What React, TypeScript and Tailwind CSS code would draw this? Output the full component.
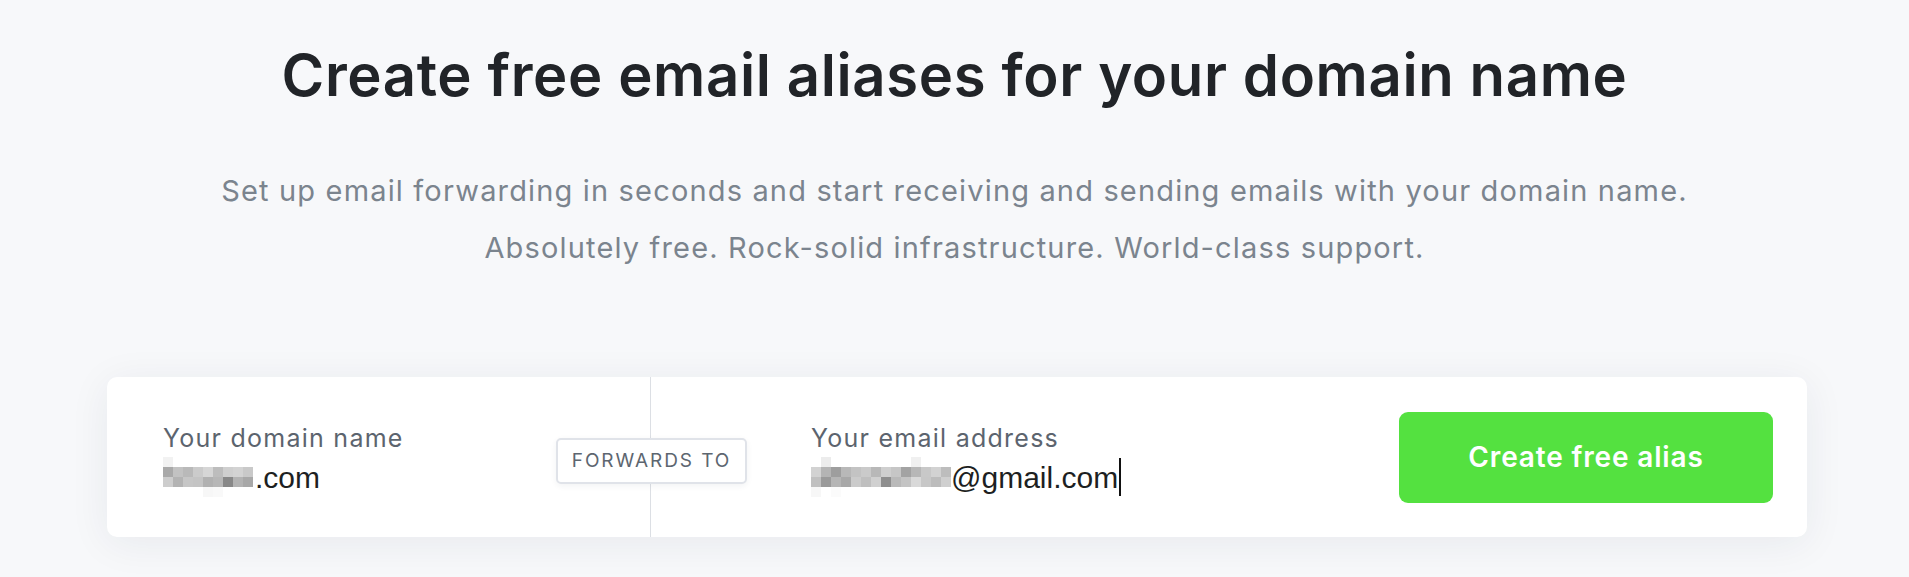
import { Fragment } from 'react';

const domainPixels = [
  ['#f2f2f2', '#ffffff', '#ffffff', '#ffffff', '#ffffff', '#ffffff', '#ffffff', '#ffffff', '#ffffff'],
  ['#a9a9a9', '#c2c2c2', '#b9b9b9', '#cbcbcb', '#d6d6d6', '#bdbdbd', '#cfcfcf', '#d3d3d3', '#c9c9c9'],
  ['#cdcdcd', '#b3b3b3', '#c6c6c6', '#c4c4c4', '#b1b1b1', '#b7b7b7', '#888888', '#b3b3b3', '#a8a8a8'],
  ['#ffffff', '#ffffff', '#ffffff', '#ffffff', '#f7f7f7', '#f9f9f9', '#ffffff', '#ffffff', '#ffffff'],
];

const emailPixels = [
  ['#ffffff', '#ececec', '#ffffff', '#ffffff', '#ffffff', '#ffffff', '#ffffff', '#ffffff', '#ffffff', '#ffffff', '#f0f0f0', '#ffffff', '#ffffff', '#ffffff'],
  ['#d2d2d2', '#b4b4b4', '#9e9e9e', '#b8b8b8', '#c3c3c3', '#cacaca', '#b8b8b8', '#cfcfcf', '#c6c6c6', '#a3a3a3', '#b7b7b7', '#c8c8c8', '#d2d2d2', '#bdbdbd'],
  ['#c0c0c0', '#9a9a9a', '#b5b5b5', '#a8a8a8', '#cbcbcb', '#bfbfbf', '#d0d0d0', '#8e8e8e', '#b9b9b9', '#c4c4c4', '#d9d9d9', '#c7c7c7', '#bcbcbc', '#cfcfcf'],
  ['#f7f7f7', '#ffffff', '#fbfbfb', '#ffffff', '#ffffff', '#ffffff', '#ffffff', '#ffffff', '#ffffff', '#ffffff', '#ffffff', '#ffffff', '#ffffff', '#ffffff'],
];

function Pixelated({ rows }: { rows: string[][] }) {
  return (
    <span className="inline-flex flex-col shrink-0">
      {rows.map((row, i) => (
        <span key={i} className="flex">
          {row.map((c, j) => (
            <Fragment key={j}>
              <span className="block w-[10px] h-[10px]" style={{ backgroundColor: c }} />
            </Fragment>
          ))}
        </span>
      ))}
    </span>
  );
}

export default function App() {
  return (
    <div className="min-h-[577px] bg-[#f7f8fa] pt-[40px] font-['Inter',sans-serif]">
      <h1 className="text-center text-[58px] leading-[70px] font-semibold text-[#212428] tracking-[0.011em]">
        Create free email aliases for your domain name
      </h1>

      <p className="mt-[52px] text-center text-[29px] leading-[57px] text-[#7b848e] tracking-[0.04em]">
        Set up email forwarding in seconds and start receiving and sending emails with your domain name.
        <br />
        Absolutely free. Rock-solid infrastructure. World-class support.
      </p>

      {/* Alias form */}
      <div className="ml-[107px] mt-[101px] w-[1700px] h-[160px] bg-white rounded-[10px] shadow-[0_6px_40px_rgba(30,45,70,0.07)] flex relative">
        <div className="w-[543px] pl-[56px] pt-[7px] flex flex-col justify-center">
          <span className="text-[25px] leading-[30px] text-[#5c646e] tracking-[0.05em]">Your domain name</span>
          <span className="mt-[3px] flex items-center h-[42px] font-['Liberation_Sans',Arial,sans-serif] text-[30px] text-[#1d1f22]">
            <Pixelated rows={domainPixels} />
            <span className="ml-[2px]">.com</span>
          </span>
        </div>

        <div className="flex-1 border-l border-[#dcdfe4] pl-[160px] pr-[34px] flex items-center">
          <div className="flex-1 pt-[7px] flex flex-col justify-center">
            <span className="text-[25px] leading-[30px] text-[#5c646e] tracking-[0.05em]">Your email address</span>
            <span className="mt-[3px] flex items-center h-[42px] font-['Liberation_Sans',Arial,sans-serif] text-[30px] text-[#1d1f22]">
              <Pixelated rows={emailPixels} />
              <span>@gmail.com</span>
              <span className="ml-[1px] w-[2px] h-[38px] bg-[#111]" />
            </span>
          </div>
          <button className="w-[374px] h-[91px] rounded-[9px] bg-[#54e140] text-white text-[28px] font-semibold tracking-[0.03em]">
            Create free alias
          </button>
        </div>

        <span className="absolute left-[449px] top-[61px] w-[191px] h-[46px] flex items-center justify-center bg-white border-2 border-[#e0e3e9] rounded-[5px] shadow-[0_2px_6px_rgba(30,45,70,0.06)] text-[19px] tracking-[0.1em] text-[#5d6670]">
          FORWARDS TO
        </span>
      </div>
    </div>
  );
}
